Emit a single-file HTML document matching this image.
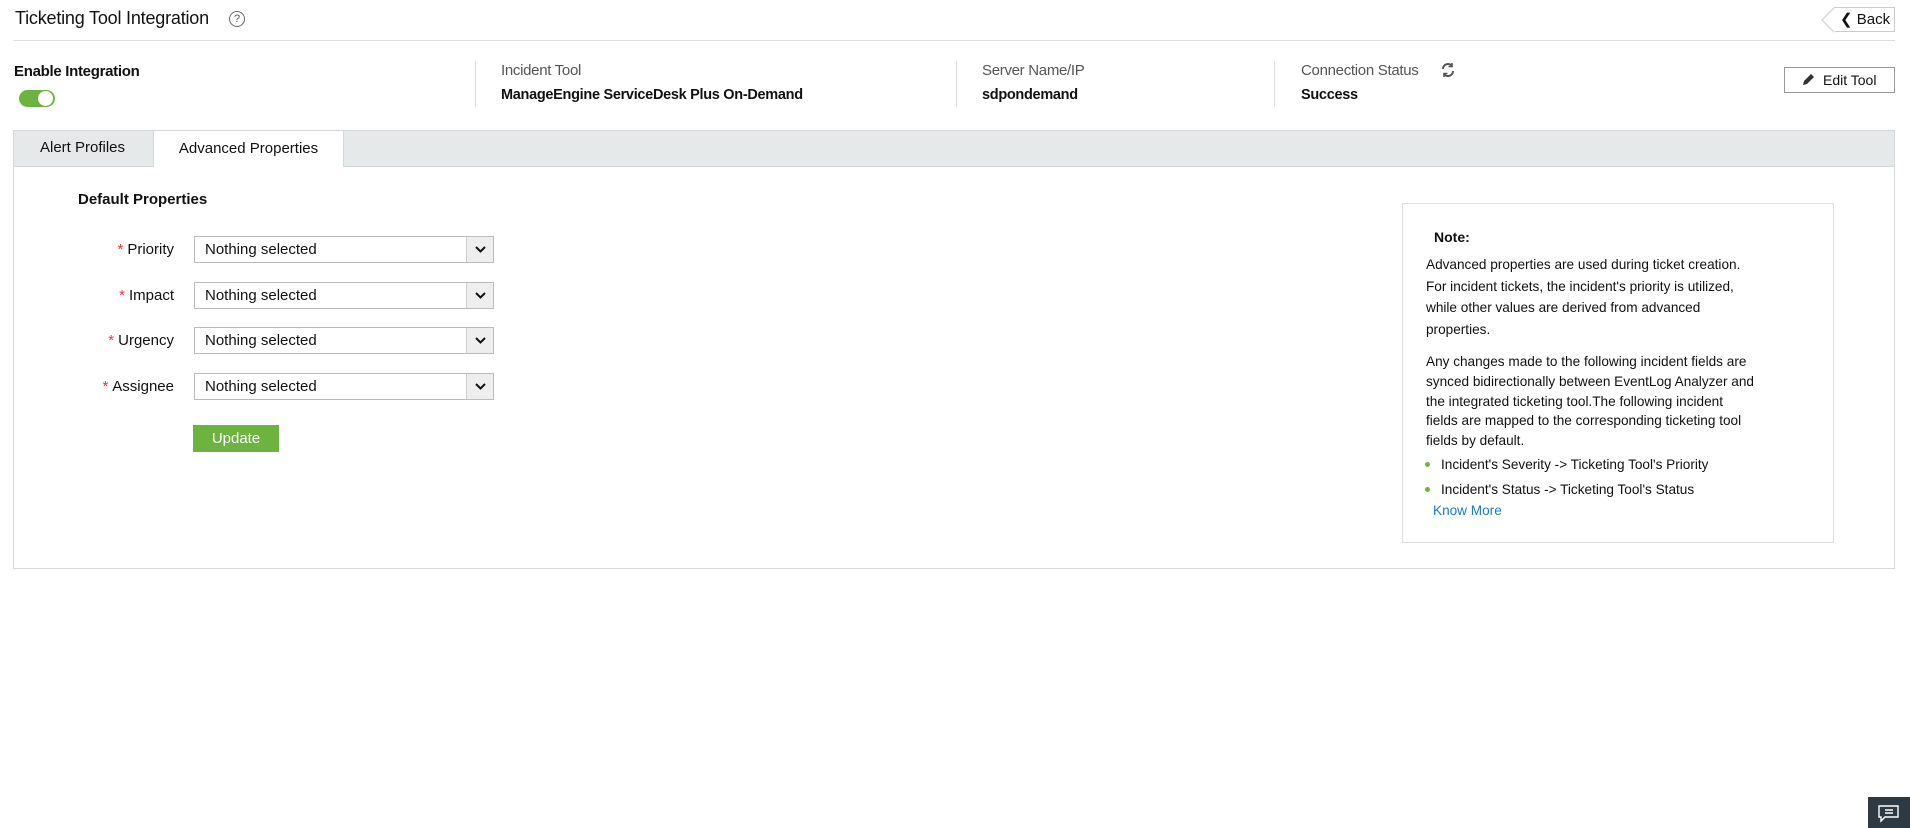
<!DOCTYPE html>
<html><head><meta charset="utf-8"><style>
*{box-sizing:border-box;margin:0;padding:0}
body{width:1910px;height:828px;background:#fff;font-family:"Liberation Sans",sans-serif;color:#111;position:relative;overflow:hidden}
.a{position:absolute}
.title{left:15px;top:8px;font-size:18px;letter-spacing:-0.2px}
.help{left:229px;top:11px;width:16px;height:16px;border:1px solid #666;border-radius:50%;font-size:11px;text-align:center;line-height:14px;color:#555}
.hr{left:13px;top:40px;width:1882px;height:1px;background:#ddd}
.back{left:1834px;top:7px;width:61px;height:25px;border:1px solid #ccc;border-left:none;font-size:15px;line-height:23px;padding-left:6px}
.back:before{content:"";position:absolute;left:-9px;top:3px;width:17px;height:17px;border-left:1px solid #ccc;border-bottom:1px solid #ccc;transform:rotate(45deg);background:#fff}
.back span{position:relative}
.lbl{font-size:15px;color:#555;letter-spacing:-0.3px}
.val{font-size:14.5px;font-weight:bold;color:#111;letter-spacing:-0.3px}
.vd{width:1px;height:46px;top:61px;background:#ddd}
.edit{left:1784px;top:67px;width:111px;height:26px;border:1px solid #999;font-size:14px;line-height:24px;padding-left:38px}
.tabs{left:13px;top:130px;width:1882px;height:37px;background:#e6e9ea;border:1px solid #d4d8da}
.panel{left:13px;top:166px;width:1882px;height:403px;border:1px solid #d4d8da;border-top:none}
.tab2{left:153px;top:130px;width:191px;height:37px;background:#fff;border:1px solid #d4d8da;border-bottom:none;font-size:15px;text-align:center;line-height:35px}
.row{left:0;width:494px;height:27px}
.row .l{position:absolute;right:320px;top:5px;font-size:15px;white-space:nowrap}
.row .l b{color:#e33;font-weight:normal;margin-right:4px}
.sel{position:absolute;left:194px;top:0;width:300px;height:27px;border:1px solid #bbb;font-size:15px;line-height:25px;padding-left:10px}
.sel i{position:absolute;right:0;top:0;width:27px;height:25px;background:#eee;border-left:1px solid #ccc}
.note{left:1402px;top:203px;width:432px;height:340px;border:1px solid #ddd}
.p{font-size:13.6px;line-height:21.5px;color:#111}
.dot{width:5px;height:5px;border-radius:50%;background:#6db33f}
</style></head><body>
<div class="a title">Ticketing Tool Integration</div>
<div class="a help">?</div>
<div class="a back"><span>&#10094; Back</span></div>
<div class="a hr"></div>

<div class="a val" style="left:14px;top:63px;font-size:15px">Enable Integration</div>
<div class="a" style="left:19px;top:90px;width:36px;height:17px;border-radius:9px;background:#6db33f"></div>
<div class="a" style="left:38px;top:91px;width:15px;height:15px;border-radius:50%;background:#fff"></div>

<div class="a vd" style="left:475px"></div>
<div class="a lbl" style="left:501px;top:62px">Incident Tool</div>
<div class="a val" style="left:501px;top:87px">ManageEngine ServiceDesk Plus On-Demand</div>
<div class="a vd" style="left:956px"></div>
<div class="a lbl" style="left:982px;top:62px">Server Name/IP</div>
<div class="a val" style="left:982px;top:87px">sdpondemand</div>
<div class="a vd" style="left:1274px"></div>
<div class="a lbl" style="left:1301px;top:62px">Connection Status</div>
<svg class="a" style="left:1440px;top:62px" width="16" height="16" viewBox="0 0 16 16" fill="none" stroke="#555" stroke-width="2"><path d="M3 7a5 5 0 0 1 9-3M13 9a5 5 0 0 1-9 3"/><path d="M12 1v3.5H8.5M4 15v-3.5h3.5" stroke-width="1.6"/></svg>
<div class="a val" style="left:1301px;top:87px">Success</div>
<div class="a edit">Edit Tool</div>
<svg class="a" style="left:1801px;top:72px" width="15" height="15" viewBox="0 0 15 15"><path d="M2 13l1-4 7-7 3 3-7 7z" fill="#333"/></svg>

<div class="a tabs"></div>
<div class="a" style="left:40px;top:139px;font-size:15px">Alert Profiles</div>
<div class="a tab2">Advanced Properties</div>
<div class="a panel"></div>

<div class="a" style="left:78px;top:191px;font-size:15px;font-weight:bold">Default Properties</div>
<div class="a row" style="top:236px"><span class="l"><b>*</b>Priority</span><div class="sel">Nothing selected<i><svg width="27" height="25"><path d="M9 10l4.5 4.5L18 10" stroke="#111" stroke-width="2" fill="none"/></svg></i></div></div>
<div class="a row" style="top:282px"><span class="l"><b>*</b>Impact</span><div class="sel">Nothing selected<i><svg width="27" height="25"><path d="M9 10l4.5 4.5L18 10" stroke="#111" stroke-width="2" fill="none"/></svg></i></div></div>
<div class="a row" style="top:327px"><span class="l"><b>*</b>Urgency</span><div class="sel">Nothing selected<i><svg width="27" height="25"><path d="M9 10l4.5 4.5L18 10" stroke="#111" stroke-width="2" fill="none"/></svg></i></div></div>
<div class="a row" style="top:373px"><span class="l"><b>*</b>Assignee</span><div class="sel">Nothing selected<i><svg width="27" height="25"><path d="M9 10l4.5 4.5L18 10" stroke="#111" stroke-width="2" fill="none"/></svg></i></div></div>
<div class="a" style="left:193px;top:425px;width:86px;height:27px;background:#6db33f;color:#fff;font-size:15px;text-align:center;line-height:27px">Update</div>

<div class="a note"></div>
<div class="a" style="left:1434px;top:229px;font-size:14px;font-weight:bold">Note:</div>
<div class="a p" style="left:1426px;top:254px;width:400px">Advanced properties are used during ticket creation.<br>For incident tickets, the incident's priority is utilized,<br>while other values are derived from advanced<br>properties.</div>
<div class="a p" style="left:1426px;top:352px;width:400px;line-height:19.8px">Any changes made to the following incident fields are<br>synced bidirectionally between EventLog Analyzer and<br>the integrated ticketing tool.The following incident<br>fields are mapped to the corresponding ticketing tool<br>fields by default.</div>
<div class="a dot" style="left:1425px;top:462px"></div>
<div class="a p" style="left:1441px;top:454px">Incident's Severity -&gt; Ticketing Tool's Priority</div>
<div class="a dot" style="left:1425px;top:487px"></div>
<div class="a p" style="left:1441px;top:479px">Incident's Status -&gt; Ticketing Tool's Status</div>
<div class="a p" style="left:1433px;top:500px;color:#1e7ac6">Know More</div>

<div class="a" style="left:1868px;top:797px;width:42px;height:31px;background:#2e3a43"></div>
<svg class="a" style="left:1878px;top:805px" width="22" height="18" viewBox="0 0 22 18" fill="none" stroke="#fff" stroke-width="1.4"><path d="M1 1h19v11H7l-4 4v-4H1z"/><path d="M7 5h8M7 8h8"/></svg>
</body></html>
